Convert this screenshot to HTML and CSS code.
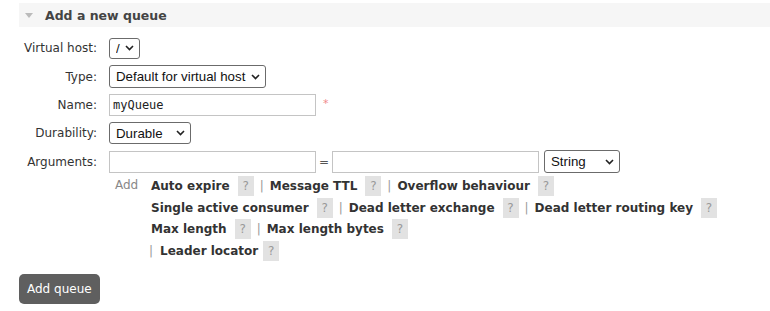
FILE: index.html
```html
<!DOCTYPE html>
<html lang="en">
<head>
    <meta charset="UTF-8">
    <meta name="viewport" content="width=device-width, initial-scale=1.0">
    <title>Add a new queue</title>
    <link rel="stylesheet" href="styles.css">
</head>
<body>
    <div class="section">
        <h2 class="section-title"><span class="toggle"></span>Add a new queue</h2>

        <form class="queue-form">
            <div class="form-row">
                <label for="vhost">Virtual host:</label>
                <div class="field">
                    <span class="select-wrap">
                        <select id="vhost" class="select select-vhost"><option>/</option></select>
                        <svg class="chevron" width="9" height="6" viewBox="0 0 9 6"><path d="M1 1l3.5 3.5L8 1" fill="none" stroke="#222" stroke-width="1.6"/></svg>
                    </span>
                </div>
            </div>

            <div class="form-row">
                <label for="type">Type:</label>
                <div class="field">
                    <span class="select-wrap">
                        <select id="type" class="select select-type"><option>Default for virtual host</option></select>
                        <svg class="chevron" width="9" height="6" viewBox="0 0 9 6"><path d="M1 1l3.5 3.5L8 1" fill="none" stroke="#222" stroke-width="1.6"/></svg>
                    </span>
                </div>
            </div>

            <div class="form-row">
                <label for="name">Name:</label>
                <div class="field">
                    <input type="text" id="name" class="text-input" value="myQueue">
                    <span class="mand">*</span>
                </div>
            </div>

            <div class="form-row">
                <label for="durable">Durability:</label>
                <div class="field">
                    <span class="select-wrap">
                        <select id="durable" class="select select-durable"><option>Durable</option></select>
                        <svg class="chevron" width="9" height="6" viewBox="0 0 9 6"><path d="M1 1l3.5 3.5L8 1" fill="none" stroke="#222" stroke-width="1.6"/></svg>
                    </span>
                </div>
            </div>

            <div class="form-row">
                <label for="argKey">Arguments:</label>
                <div class="field">
                    <input type="text" id="argKey" class="text-input">
                    <span class="equals">=</span>
                    <input type="text" id="argValue" class="text-input">
                    <span class="select-wrap argtype-wrap">
                        <select class="select select-argtype"><option>String</option></select>
                        <svg class="chevron" width="9" height="6" viewBox="0 0 9 6"><path d="M1 1l3.5 3.5L8 1" fill="none" stroke="#222" stroke-width="1.6"/></svg>
                    </span>
                </div>
            </div>

            <div class="form-row">
                <span></span>
                <div class="arg-help">
                    <span class="add-label">Add</span>
                    <div class="arg-links">
                        <div class="arg-line">
                            <span class="arg-link">Auto expire</span><span class="help">?</span><span class="sep">|</span>
                            <span class="arg-link">Message TTL</span><span class="help">?</span><span class="sep">|</span>
                            <span class="arg-link">Overflow behaviour</span><span class="help">?</span>
                        </div>
                        <div class="arg-line">
                            <span class="arg-link">Single active consumer</span><span class="help">?</span><span class="sep">|</span>
                            <span class="arg-link">Dead letter exchange</span><span class="help">?</span><span class="sep">|</span>
                            <span class="arg-link">Dead letter routing key</span><span class="help">?</span>
                        </div>
                        <div class="arg-line">
                            <span class="arg-link">Max length</span><span class="help">?</span><span class="sep">|</span>
                            <span class="arg-link">Max length bytes</span><span class="help">?</span>
                        </div>
                        <div class="arg-line last">
                            <span class="sep">|</span>
                            <span class="arg-link">Leader locator</span><span class="help">?</span>
                        </div>
                    </div>
                </div>
            </div>
        </form>

        <button class="btn">Add queue</button>
    </div>
</body>
</html>
```

FILE: styles.css
```css
body {
    font-family: "DejaVu Sans", Verdana, sans-serif;
    font-size: 12px;
    color: #333;
    margin: 0;
    padding: 3px 0 0 19px;
    background-color: #fff;
}

.section-title {
    display: flex;
    align-items: center;
    height: 24px;
    margin: 0;
    padding-left: 6px;
    font-size: 12.5px;
    font-weight: bold;
    color: #444;
    background-color: #f6f6f6;
}

.toggle {
    width: 0;
    height: 0;
    border-left: 4px solid transparent;
    border-right: 4px solid transparent;
    border-top: 5px solid #bbb;
    margin: 1px 12px 0 0;
}

.queue-form {
    display: flex;
    flex-direction: column;
    gap: 6px;
    margin-top: 10px;
}

.form-row {
    display: grid;
    grid-template-columns: 78px 1fr;
    column-gap: 12px;
    align-items: center;
    min-height: 22px;
}

.form-row label {
    text-align: right;
    white-space: nowrap;
}

.field {
    display: flex;
    align-items: center;
}

.select-wrap {
    position: relative;
    display: inline-flex;
}

.select {
    appearance: none;
    -webkit-appearance: none;
    height: 22px;
    padding: 0 0 0 6px;
    font-family: "Liberation Sans", Arial, sans-serif;
    font-size: 13.3px;
    color: #111;
    background-color: #fff;
    border: 1px solid #6b6b6b;
    border-radius: 3px;
}

.select-vhost {
    width: 31px;
    height: 21px;
}

.select-type {
    width: 157px;
    height: 23px;
}

.select-durable {
    width: 82px;
}

.select-argtype {
    width: 76px;
    height: 23px;
}

.chevron {
    position: absolute;
    right: 6px;
    top: 50%;
    margin-top: -3px;
    pointer-events: none;
}

.text-input {
    width: 207px;
    height: 22px;
    padding: 0 3px;
    box-sizing: border-box;
    font-family: "DejaVu Sans Mono", "Liberation Mono", monospace;
    font-size: 12px;
    color: #222;
    border: 1px solid #c4c4c4;
    border-radius: 0;
}

.mand {
    margin: -4px 0 0 7px;
    color: #f08a8a;
    font-size: 11px;
}

.equals {
    width: 16px;
    text-align: center;
    color: #555;
}

.argtype-wrap {
    margin-left: 5px;
}

.arg-help {
    display: grid;
    grid-template-columns: 42px 1fr;
    align-items: start;
    margin-top: -4px;
}

.add-label {
    padding-left: 6px;
    color: #888;
    line-height: 20px;
}

.arg-line {
    display: flex;
    align-items: center;
    height: 21.7px;
    white-space: nowrap;
}

.arg-link {
    font-weight: bold;
    color: #333;
}

.help {
    display: inline-block;
    width: 16px;
    height: 20px;
    line-height: 20px;
    margin-left: 8px;
    text-align: center;
    color: #999;
    background-color: #e2e2e2;
}

.sep {
    margin: 0 6px 0 6px;
    color: #999;
}

.arg-line.last {
    margin-left: -2px;
}

.arg-line.last .sep {
    margin: 0 7px 0 0;
}

.arg-line.last .help {
    margin-left: 5px;
}

.btn {
    display: block;
    margin-top: 12px;
    height: 30px;
    padding: 0 8px;
    font-family: "DejaVu Sans", Verdana, sans-serif;
    font-size: 12px;
    color: #fff;
    background-color: #5f5f5f;
    border: none;
    border-radius: 5px;
    cursor: pointer;
}
```
